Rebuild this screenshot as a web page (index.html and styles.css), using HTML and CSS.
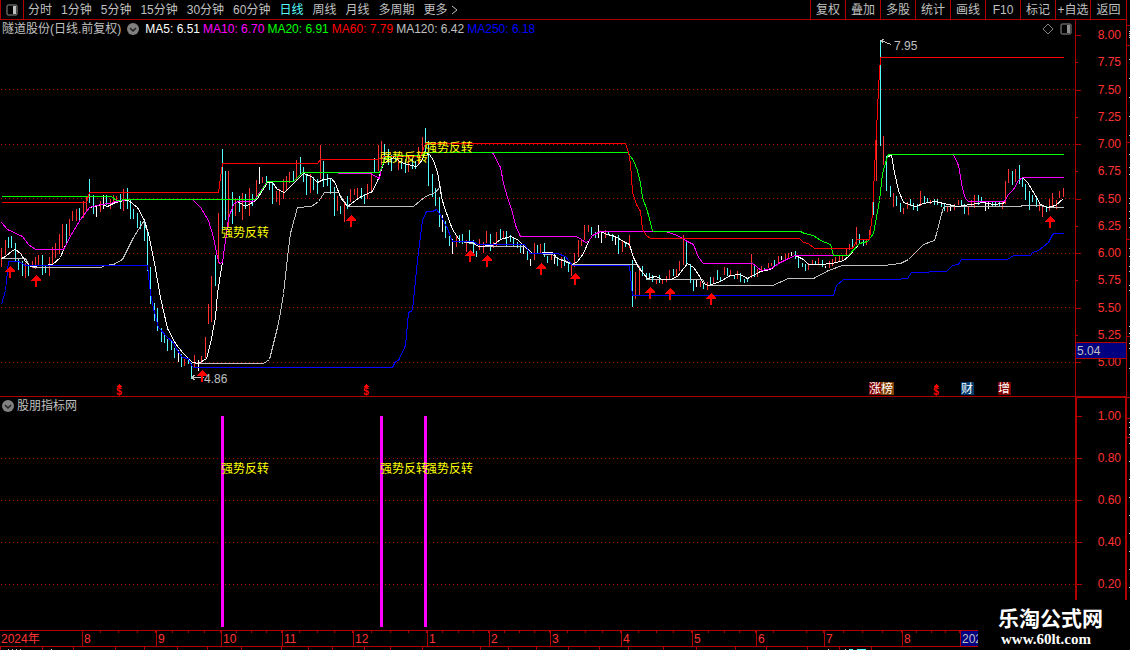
FILE: index.html
```html
<!DOCTYPE html>
<html lang="zh-CN">
<head>
    <meta charset="UTF-8">
    <meta name="viewport" content="width=device-width, initial-scale=1.0">
    <title>隧道股份 - 日线</title>
    <link rel="stylesheet" href="styles.css">
</head>
<body>

    <header class="toolbar">
        <button type="button" class="layout-btn" aria-label="布局">
            <svg width="12" height="12" viewBox="0 0 12 12"><rect x="1" y="1" width="10" height="10" rx="1" fill="none" stroke="#909090"/><rect x="7" y="2" width="3" height="8" fill="#c0c0c0"/></svg>
        </button>
        <nav class="periods">
            <button type="button">分时</button>
            <button type="button">1分钟</button>
            <button type="button">5分钟</button>
            <button type="button">15分钟</button>
            <button type="button">30分钟</button>
            <button type="button">60分钟</button>
            <button type="button" class="active">日线</button>
            <button type="button">周线</button>
            <button type="button">月线</button>
            <button type="button">多周期</button>
            <button type="button" class="more">更多<svg width="7" height="10" viewBox="0 0 7 10"><path d="M1 1L6 5L1 9" fill="none" stroke="#c0c0c0"/></svg></button>
        </nav>
        <div class="tools">
            <button type="button">复权</button>
            <button type="button">叠加</button>
            <button type="button">多股</button>
            <button type="button">统计</button>
            <button type="button">画线</button>
            <button type="button">F10</button>
            <button type="button">标记</button>
            <button type="button">+自选</button>
            <button type="button">返回</button>
        </div>
    </header>

    <main class="workspace">
        <div class="panes">

            <!-- K line pane -->
            <section class="pane pane-main">
                <div class="plot">
                    <div class="legend">
                        <span>隧道股份(日线.前复权)</span>
                        <button type="button" class="caret" aria-label="展开">
                            <svg width="12" height="12" viewBox="0 0 12 12"><circle cx="6" cy="6" r="6" fill="#808080"/><path d="M3 5L6 8L9 5" fill="none" stroke="#202020" stroke-width="1.5"/></svg>
                        </button>
                        <span class="ma ma5">MA5: 6.51</span>
                        <span class="ma ma10">MA10: 6.70</span>
                        <span class="ma ma20">MA20: 6.91</span>
                        <span class="ma ma60">MA60: 7.79</span>
                        <span class="ma ma120">MA120: 6.42</span>
                        <span class="ma ma250">MA250: 6.18</span>
                        <span class="legend-icons">
                            <svg width="12" height="12" viewBox="0 0 12 12"><path d="M6 1L11 6L6 11L1 6Z" fill="none" stroke="#808080"/></svg>
                            <svg width="12" height="12" viewBox="0 0 12 12"><rect x="1" y="1" width="10" height="10" rx="1" fill="none" stroke="#909090"/><rect x="7" y="2" width="3" height="8" fill="#909090"/></svg>
                        </span>
                    </div>
                    <svg class="chart" viewBox="0 38 1075 358">
                        <defs>
                            <path id="buy" d="M0 0L5 5V6H1V12H-1V6H-5V5Z"/>
                            <path id="hat" d="M0 0L3 3H-3Z"/>
                        </defs>
                        <path class="grid" transform="translate(0 0.5)" d="M1 89H1074M1 144H1074M1 198H1074M1 253H1074M1 307H1074M1 362H1074"/>

                        <g transform="translate(0.5 0.5)">
                            <path class="bar up" d="M1 247V266M5 239V254M25 262V277M32 260V267M35 256V268M38 254V264M49 256V275M52 246V263M55 242V257M59 233V253M62 223V247M69 218V235M72 210V220M76 208V220M83 200V217M86 195V210M100 200V211M110 198V208M113 194V202M116 195V202M123 188V210M184 358V365M194 354V366M201 355V362M205 336V357M208 303V323M211 275V321M218 212V262M228 170V226M235 197V215M242 192V219M249 187V215M256 179V198M262 176V182M276 190V201M279 188V204M283 178V198M286 175V190M289 171V182M296 159V179M310 173V192M320 144V178M337 195V210M344 200V221M350 188V201M354 188V194M357 187V197M367 183V198M371 174V191M378 144V170M381 140V164M398 158V169M408 154V171M418 146V163M422 136V155M456 235V246M466 239V251M479 238V249M483 241V252M486 230V242M493 241V247M496 231V245M503 230V237M534 242V259M540 243V252M551 252V259M561 256V267M571 264V275M574 252V266M578 239V256M581 238V245M584 224V239M588 224V231M605 229V237M622 240V251M629 234V247M635 271V298M639 265V294M656 278V283M662 278V283M666 275V281M669 269V278M676 268V275M679 260V270M683 234V264M700 280V286M707 281V289M713 276V283M724 266V274M730 269V275M737 270V278M751 253V277M757 268V276M761 265V270M768 262V267M771 262V265M778 255V263M785 253V258M788 252V258M808 262V269M812 259V264M818 257V264M829 260V267M832 258V265M835 256V262M839 255V260M842 254V259M846 248V255M849 243V249M856 226V244M866 238V244M869 229V239M876 121V180M883 135V164M893 192V206M903 207V213M907 201V208M920 190V205M930 199V203M947 205V211M954 203V209M958 199V204M968 205V214M971 199V205M974 194V207M1002 200V208M1005 180V203M1008 168V182M1015 168V181M1039 201V210M1042 205V216M1049 198V210M1052 192V207M1056 199V208M1059 190V197M1063 187V196"/>
                            <path class="bar down" d="M8 236V247M11 235V247M15 242V261M18 257V269M22 260V275M28 263V275M42 254V274M45 264V272M66 223V244M79 207V221M89 178V202M93 194V213M106 194V204M120 193V208M127 187V208M130 199V218M133 208V218M137 212V227M140 220V228M144 220V240M147 230V270M150 266V303M154 302V320M157 307V330M161 327V341M164 332V342M167 338V350M171 340V349M174 347V357M181 353V366M188 358V363M191 362V378M215 254V285M222 148V229M225 170V219M232 191V223M239 195V211M245 193V208M252 193V205M266 175V182M269 180V189M272 182V203M293 170V181M300 156V174M303 166V181M306 173V194M313 176V189M317 178V193M323 160V186M327 173V185M330 178V193M334 186V215M340 205V213M347 195V208M361 187V198M364 193V203M374 157V171M384 143V160M388 148V164M391 154V170M395 153V161M401 157V168M405 158V172M412 158V168M415 160V168M425 127V151M428 140V185M432 173V196M435 187V205M439 196V226M445 220V237M449 235V245M459 234V242M462 233V243M469 229V243M473 239V252M476 250V256M490 233V250M500 228V238M506 230V245M510 234V241M513 237V245M517 241V247M520 243V252M527 250V259M537 244V252M544 242V256M547 255V262M557 256V265M564 256V265M568 262V271M591 226V234M595 231V237M608 230V234M612 233V240M618 234V253M625 241V246M632 259V306M642 265V275M646 272V279M649 272V278M652 274V281M659 274V282M673 268V275M686 239V263M690 263V282M693 278V290M703 282V288M710 276V284M717 269V279M720 276V281M727 267V275M734 274V278M740 272V281M744 278V282M747 278V281M754 265V276M764 267V270M774 259V265M795 250V258M798 254V267M802 262V266M805 263V270M815 260V264M822 259V266M852 238V247M859 233V242M863 238V245M873 185V214M880 40V145M886 155V190M890 185V196M896 195V205M900 202V211M910 198V205M913 202V209M917 203V210M924 195V202M927 197V201M934 198V204M937 198V204M941 201V206M944 203V210M961 199V204M964 203V213M978 194V204M981 196V201M992 200V205M995 200V206M999 200V205M1012 170V184M1019 164V183M1022 176V186M1025 183V199M1029 190V209M1032 194V201M1036 196V206M1046 205V211"/>
                            <path class="bar flat" d="M96 204V216M103 194V208M178 349V361M198 359V370M259 166V183M442 214V231M452 238V253M523 245V253M530 258V265M554 256V263M598 224V237M601 230V242M615 235V244M696 279V286M781 255V259M791 251V255M825 265V267M950 205V210M985 202V210M988 201V208"/>

                            <polyline class="line l120" points="1,258 25,258 28,264 33,267 101,267 104,265 113,264 122,259 133,237 143,221 148,233 154,263 160,297 167,328 175,343 182,352 192,362 198,363 263,363 269,359 273,343 277,327 280,312 283,293 287,257 290,233 297,207 311,206 318,201 324,192 338,192 347,206 413,206 425,196 435,192 440,186 441,197 445,210 452,229 460,241 473,243 478,246 525,246 532,253 552,254 557,258 567,261 572,264 637,264 647,279 702,279 705,284 708,285 772,285 788,278 813,278 828,270 842,265 883,265 900,263 908,259 915,252 923,244 934,240 937,230 940,217 943,207 946,206 1020,206 1022,205 1040,205 1047,207 1063,207"/>
                            <polyline class="line l5" points="1,258 5,256 12,250 15,249 20,253 25,261 30,266 43,265 52,264 60,257 63,249 72,232 80,219 89,207 102,204 107,206 115,202 123,200 128,200 137,207 144,220 148,233 154,263 160,297 167,328 175,343 182,352 192,362 198,363 206,358 210,343 215,317 217,293 221,267 222,262 225,240 228,218 233,204 237,201 242,204 245,206 252,202 257,198 267,182 272,182 277,189 284,192 293,183 303,173 311,176 317,182 323,179 331,178 335,183 340,197 347,206 359,197 372,191 378,178 383,163 393,157 403,163 416,166 420,162 425,153 429,154 433,160 437,172 439,183 441,197 445,210 452,229 460,241 472,242 478,246 492,245 500,239 510,236 517,239 525,247 532,253 552,252 557,258 567,262 572,264 577,261 583,253 588,241 592,235 600,231 607,234 615,236 623,241 629,244 633,257 638,267 647,278 655,276 662,279 670,279 677,276 687,263 693,267 698,274 703,283 708,285 720,281 730,275 740,274 747,278 760,271 770,269 778,263 788,258 795,255 803,259 808,264 820,264 832,263 843,260 848,256 859,243 867,241 873,233 879,200 882,173 887,156 891,155 894,172 898,190 903,202 915,206 923,203 935,201 943,203 957,206 983,202 993,204 1003,203 1008,194 1013,189 1018,180 1022,177 1027,182 1035,195 1040,204 1047,207 1055,205 1063,198"/>
                            <polyline class="line l10" points="1,222 7,229 22,236 28,244 35,249 63,249 72,232 80,219 89,207 100,204 110,203 115,201 128,199 192,199 200,207 208,220 213,237 217,257 219,263 222,262 225,240 228,218 233,204 237,201 253,201 267,181 293,181 302,172 370,173 379,178 381,167 385,158 397,155 420,155 428,152 492,152 500,167 503,183 507,197 512,212 515,225 520,236 576,236 581,239 585,242 588,241 592,235 600,231 665,231 677,235 685,240 693,244 698,257 703,263 752,263 761,270 771,268 778,263 788,258 795,255 848,255 859,243 867,241 873,233 879,200 882,173 887,156 888,154 953,154 958,165 962,188 965,198 968,201 1004,201 1008,194 1013,189 1018,180 1022,177 1063,177"/>
                            <polyline class="line l20" points="1,196 111,196 116,200 127,199 255,199 267,181 293,181 302,172 379,172 385,158 397,155 420,155 428,152 627,152 633,160 637,170 640,183 642,197 647,211 652,230 653,231 800,231 804,233 813,235 820,240 830,244 833,255 848,255 859,243 867,241 873,233 879,200 882,173 887,156 888,154 1063,154"/>
                            <polyline class="line l60" points="1,202 86,202 89,192 218,192 222,163 317,163 320,159 378,159 383,156 420,156 425,143 625,143 628,152 630,163 632,192 636,204 640,211 642,229 646,235 650,238 799,238 803,242 808,243 814,248 852,248 857,239 869,239 872,213 874,170 876,130 878,88 880,57 1063,57"/>
                            <polyline class="line l250" points="1,304 5,290 8,261 18,261 25,265 147,265 150,293 153,308 158,327 167,337 172,341 177,350 182,357 188,358 191,365 193,367 392,367 395,361 398,360 405,345 408,312 412,310 417,260 422,220 426,211 432,211 436,209 439,213 447,228 452,241 473,241 477,244 524,244 530,253 557,253 565,256 572,265 629,265 632,295 833,295 836,285 843,279 895,279 907,278 911,272 946,271 952,265 958,264 961,259 1007,259 1013,255 1030,255 1032,252 1038,250 1048,242 1052,234 1054,233 1063,233"/>

                            <path class="pointer" d="M891 44L880 40M884 39L880 40L883 43M203 377H191M195 374L191 377L195 380"/>
                        </g>

                        <g class="signals">
                            <use href="#buy" x="10" y="266"/>
                            <use href="#buy" x="36" y="275"/>
                            <use href="#buy" x="202" y="370"/>
                            <use href="#buy" x="351" y="215"/>
                            <use href="#buy" x="470" y="250"/>
                            <use href="#buy" x="487" y="255"/>
                            <use href="#buy" x="541" y="263"/>
                            <use href="#buy" x="575" y="273"/>
                            <use href="#buy" x="650" y="287"/>
                            <use href="#buy" x="670" y="288"/>
                            <use href="#buy" x="711" y="293"/>
                            <use href="#buy" x="1050" y="216"/>
                        </g>

                        <text class="price" x="894" y="50">7.95</text>
                        <text class="price" x="204" y="383">4.86</text>
                        <text class="signal" x="221" y="237">强势反转</text>
                        <text class="signal" x="380" y="162">强势反转</text>
                        <text class="signal" x="425" y="152">强势反转</text>

                        <!-- event marks on the bottom edge -->
                        <g class="signals">
                            <use href="#hat" x="119" y="384"/>
                            <use href="#hat" x="366" y="384"/>
                            <use href="#hat" x="936" y="384"/>
                            <text class="dividend" x="119" y="395">$</text>
                            <text class="dividend" x="366" y="395">$</text>
                            <text class="dividend" x="936" y="395">$</text>
                        </g>
                        <rect x="869" y="382" width="13" height="13" fill="#800000"/>
                        <rect x="881" y="382" width="13" height="13" fill="#804000"/>
                        <rect x="961" y="382" width="13" height="13" fill="#003c70"/>
                        <rect x="998" y="382" width="13" height="13" fill="#800000"/>
                        <text class="event" x="869" y="393">涨榜</text>
                        <text class="event" x="961" y="393">财</text>
                        <text class="event" x="998" y="393">增</text>
                    </svg>
                </div>
                <div class="axis">
                    <ul class="scale">
                        <li>8.00</li>
                        <li>7.75</li>
                        <li>7.50</li>
                        <li>7.25</li>
                        <li>7.00</li>
                        <li>6.75</li>
                        <li>6.50</li>
                        <li>6.25</li>
                        <li>6.00</li>
                        <li>5.75</li>
                        <li>5.50</li>
                        <li>5.25</li>
                        <li>5.00</li>
                    </ul>
                    <span class="cursor-price">5.04</span>
                </div>
            </section>

            <!-- indicator pane -->
            <section class="pane pane-sub">
                <div class="plot">
                    <div class="legend">
                        <button type="button" class="caret" aria-label="展开">
                            <svg width="12" height="12" viewBox="0 0 12 12"><circle cx="6" cy="6" r="6" fill="#808080"/><path d="M3 5L6 8L9 5" fill="none" stroke="#202020" stroke-width="1.5"/></svg>
                        </button>
                        <span>股朋指标网</span>
                    </div>
                    <svg class="chart" viewBox="0 414 1075 216">
                        <path class="grid" transform="translate(0 0.5)" d="M1 458H1074M1 500H1074M1 542H1074M1 584H1074"/>
                        <g fill="#ff00ff">
                            <rect x="221" y="416" width="3" height="211"/>
                            <rect x="380" y="416" width="3" height="211"/>
                            <rect x="424" y="416" width="3" height="211"/>
                        </g>
                        <text class="signal" x="221" y="473">强势反转</text>
                        <text class="signal" x="380" y="473">强势反转</text>
                        <text class="signal" x="425" y="473">强势反转</text>
                    </svg>
                </div>
                <div class="axis">
                    <ul class="scale">
                        <li>1.00</li>
                        <li>0.80</li>
                        <li>0.60</li>
                        <li>0.40</li>
                        <li>0.20</li>
                    </ul>
                </div>
            </section>
        </div>

        <!-- edge of the quote panel on the right -->
        <svg class="edge" viewBox="0 20 3 580">
            <path fill="#b00000" d="M0 25h3v1h-3zM0 45h3v1h-3zM0 142h3v1h-3zM0 239h3v1h-3zM0 336h3v1h-3zM0 397h3v1h-3zM0 418h3v1h-3zM0 437h3v1h-3z"/>
            <path stroke="#c0c0c0" d="M2 31h1M2 33h1M2 35h1M2 37h1M2 59h1M2 78h1M2 97h1M2 116h1M2 135h1M2 154h1M2 167h1M2 174h1M2 198h1M2 203h1M2 211h1M2 218h1M2 227h1M2 248h1M2 256h1M2 266h1M2 271h1M2 285h1M2 290h1M2 326h1M2 333h1M2 343h1M2 348h1M2 368h1M2 422h1M2 427h1M2 434h1M2 443h1M2 461h1M2 479h1M2 497h1M2 515h1M2 533h1M2 551h1M2 569h1M2 587h1"/>
        </svg>
    </main>

    <ol class="timeline">
        <li>2024年</li>
        <li>8</li>
        <li>9</li>
        <li>10</li>
        <li>11</li>
        <li>12</li>
        <li>1</li>
        <li>2</li>
        <li>3</li>
        <li>4</li>
        <li>5</li>
        <li>6</li>
        <li>7</li>
        <li>8</li>
        <li class="current">2024</li>
    </ol>

    <!-- top edge of the index bar -->
    <svg class="tabs-edge" viewBox="0 0 1130 3">
        <path fill="#b00000" d="M0 0h1v3h-1zM42 0h1v3h-1zM73 0h1v3h-1zM115 0h1v3h-1zM144 0h1v3h-1zM177 0h1v3h-1zM207 0h1v3h-1zM241 0h1v3h-1zM281 0h1v3h-1zM308 0h1v3h-1zM332 0h1v3h-1zM364 0h1v3h-1zM390 0h1v3h-1zM422 0h1v3h-1zM480 0h1v3h-1zM508 0h1v3h-1zM536 0h1v3h-1zM568 0h1v3h-1zM599 0h1v3h-1zM628 0h1v3h-1zM663 0h1v3h-1zM696 0h1v3h-1zM735 0h1v3h-1zM766 0h1v3h-1zM807 0h1v3h-1zM839 0h1v3h-1zM871 0h1v3h-1z"/>
        <path fill="#c0c0c0" d="M8 2h1v1h-1zM12 2h1v1h-1zM16 2h1v1h-1zM20 2h1v1h-1zM51 2h1v1h-1zM828 2h1v1h-1zM845 2h1v1h-1z"/>
        <path fill="#54fcfc" d="M849 2h4v1h-4zM857 2h9v1h-9z"/>
    </svg>

    <div class="watermark">
        <strong>乐淘公式网</strong>
        <span>www.60lt.com</span>
    </div>

</body>
</html>
```
FILE: styles.css
```css
* {
    box-sizing: border-box;
}

body {
    position: relative;
    margin: 0;
    background: #000;
    color: #c0c0c0;
    font-family: "Liberation Sans", "Noto Sans CJK SC", sans-serif;
    font-size: 12px;
    line-height: 12px;
}

button {
    padding: 0;
    border: 0;
    background: none;
    color: inherit;
    font: inherit;
    white-space: nowrap;
    cursor: pointer;
}

svg {
    display: block;
}

ul, ol {
    list-style: none;
    margin: 0;
    padding: 0;
}

/* toolbar */
.toolbar {
    display: flex;
    height: 20px;
    margin-right: 3px;
    border-right: 1px solid #b00000;
    border-bottom: 1px solid #b00000;
}

.layout-btn {
    display: flex;
    align-items: center;
    justify-content: center;
    width: 24px;
    border-left: 1px solid #b00000;
    border-right: 1px solid #b00000;
}

.periods {
    display: flex;
    flex: 1;
    gap: 9px;
    padding-left: 4px;
}

.periods .active {
    color: #54fcfc;
}

.more {
    display: flex;
    align-items: center;
    gap: 3px;
}

.tools {
    display: flex;
}

.tools button {
    width: 35px;
    border-left: 1px solid #b00000;
}

.tools button:last-child {
    width: 36px;
}

/* panes */
.workspace {
    display: flex;
    align-items: flex-start;
}

.panes {
    flex: 1;
    min-width: 0;
}

.pane {
    display: grid;
    grid-template-columns: 1fr 52px;
}

.pane-main {
    border-bottom: 1px solid #b00000;
}

.legend {
    display: flex;
    align-items: center;
    gap: 3px;
    height: 18px;
    padding: 0 3px 0 2px;
    white-space: nowrap;
}

.pane-main .caret {
    margin: 0 3px;
}

.pane-sub .legend {
    height: 17px;
}

.legend-icons {
    display: flex;
    gap: 6px;
    margin-left: auto;
}

.ma5 { color: #fff; }
.ma10 { color: #f0f; }
.ma20 { color: #0f0; }
.ma60 { color: #f00; }
.ma120 { color: #c0c0c0; }
.ma250 { color: #00f; }

/* chart drawing */
.chart {
    width: 100%;
    height: auto;
    shape-rendering: crispEdges;
}

.grid {
    stroke: #b00000;
    stroke-dasharray: 1 3;
}

.line, .bar, .pointer {
    fill: none;
    stroke-width: 1;
}

.up { stroke: #ff3232; }
.down { stroke: #54fcfc; }
.flat { stroke: #fff; }

.l5 { stroke: #fff; }
.l10 { stroke: #f0f; }
.l20 { stroke: #0f0; }
.l60 { stroke: #f00; }
.l120 { stroke: #c0c0c0; }
.l250 { stroke: #00f; }

.pointer { stroke: #c0c0c0; }
.price { fill: #c0c0c0; }
.signal { fill: #ff0; }
.signals { fill: #f00; }
.event { fill: #fff; }

.dividend {
    font-size: 10px;
    font-weight: bold;
    text-anchor: middle;
}

/* price axis */
.axis {
    position: relative;
    display: flex;
    border-left: 1px solid #b00000;
    border-right: 1px solid #b00000;
    color: #ff3232;
}

.scale {
    display: flex;
    flex: 1;
    flex-direction: column;
    justify-content: space-between;
    padding: 9px 0 28px;
}

.scale li {
    position: relative;
    padding-right: 5px;
    text-align: right;
}

.scale li::before {
    content: "";
    position: absolute;
    top: 6px;
    left: 0;
    width: 5px;
    height: 1px;
    background: #b00000;
}

.pane-main .scale li:nth-child(even)::before {
    width: 2px;
}

.cursor-price {
    position: absolute;
    left: 0;
    right: 0;
    bottom: 37px;
    padding: 2px 1px 1px;
    border: solid #b00000;
    border-width: 1px 0;
    background: #000080;
    color: #c0c0c0;
}

.pane-sub .axis {
    border-width: 1px 2px 0;
    border-style: solid;
    border-color: #b00000;
}

.pane-sub .scale {
    padding: 12px 0 40px;
}

.pane-sub .scale li {
    padding-right: 4px;
}

.edge {
    width: 3px;
    height: auto;
    shape-rendering: crispEdges;
}

/* time axis */
.timeline {
    display: grid;
    grid-template-columns: 82fr 74fr 65fr 61fr 71fr 74fr 62fr 61fr 71fr 71fr 64fr 68fr 78fr 58fr 170fr;
    height: 17px;
    border-top: 1px solid #b00000;
    border-bottom: 1px solid #b00000;
    color: #ff3232;
    line-height: 17px;
}

.timeline li {
    min-width: 0;
    height: 15px;
    padding-left: 1px;
    border-left: 1px solid #b00000;
    background: repeating-linear-gradient(to right, transparent 0 calc(25% - 1px), #b00000 calc(25% - 1px) 25%) no-repeat;
    background-size: 100% 2px;
}

.timeline li:first-child {
    border-left: 0;
    background: none;
}

.timeline .current {
    background: #000080;
    color: #c0c0c0;
}

.tabs-edge {
    width: 100%;
    height: 3px;
    shape-rendering: crispEdges;
}

.watermark {
    position: absolute;
    right: 0;
    bottom: 0;
    display: flex;
    flex-direction: column;
    width: 152px;
    height: 50px;
    padding: 8px 0 0 20px;
    background: #000;
    color: #fff;
}

.watermark strong {
    font-size: 21px;
    line-height: 22px;
}

.watermark span {
    padding-left: 3px;
    font-family: "Liberation Serif", serif;
    font-size: 15px;
    font-weight: bold;
    line-height: 18px;
}
```
